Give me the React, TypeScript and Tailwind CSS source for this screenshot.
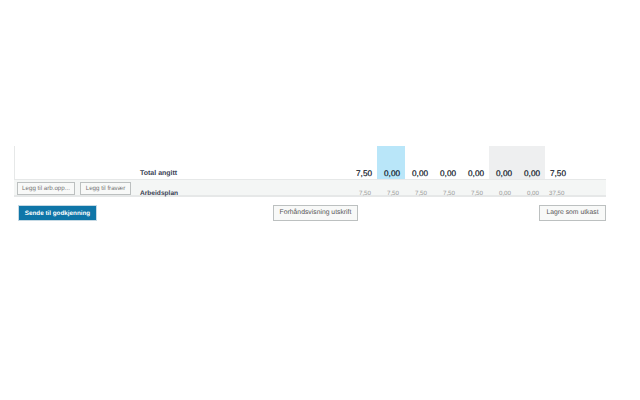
const days = [
  { t: "7,50", p: "7,50", bg: "" },
  { t: "0,00", p: "7,50", bg: "bg-[#b9e6f9]" },
  { t: "0,00", p: "7,50", bg: "" },
  { t: "0,00", p: "7,50", bg: "" },
  { t: "0,00", p: "7,50", bg: "" },
  { t: "0,00", p: "0,00", bg: "bg-[#eeeff0]" },
  { t: "0,00", p: "0,00", bg: "bg-[#eeeff0]" },
];

const geo = "[text-rendering:geometricPrecision] whitespace-nowrap";
const smallBtn = `h-[13px] border border-[#bcc0c0] bg-[#f8f9f8] text-[#777] text-[6.2px] flex items-center justify-center ${geo}`;
const bigBtn = `h-[16px] border border-[#bcc0c0] bg-[#f8f9f8] text-[#555] text-[6.8px] pt-[1px] flex items-center justify-center ${geo}`;
const total = `text-[8.2px] leading-[9px] text-[#0c1526] [-webkit-text-stroke:0.2px_#0c1526] ${geo}`;
const plan = `text-[6.2px] leading-[7px] pt-[10px] text-[#999] ${geo}`;

export default function App() {
  return (
    <div className="w-[640px] h-[400px] bg-white pt-[146px] font-['Liberation_Sans',sans-serif]">
      <div className="ml-[14px] w-[592px]">
        <div className="h-[34px] border-l border-b border-[#e6e8e8] flex">
          <div className={`w-[125px] ml-[125px] shrink-0 flex items-end pb-[1px] text-[7px] leading-[9px] font-bold text-[#3a4254] ${geo}`}>
            Total angitt
          </div>
          <div className="ml-[84px] flex">
            {days.map((d, i) => (
              <div key={i} className={`w-[28px] flex items-end justify-end pr-[5px] pb-[1px] ${total} ${d.bg}`}>
                {d.t}
              </div>
            ))}
            <div className={`w-[28px] flex items-end pl-[5px] pb-[1px] ${total}`}>7,50</div>
          </div>
        </div>
        <div className="h-[17px] bg-[#f4f6f5] border-b-2 border-[#e6e8e8] flex">
          <div className="w-[125px] shrink-0 flex gap-[5px] pl-[3px] pt-[2px]">
            <div className={`${smallBtn} w-[58px] shrink-0`}>Legg til arb.opp...</div>
            <div className={`${smallBtn} w-[51px] shrink-0`}>Legg til fravær</div>
          </div>
          <div className={`w-[209px] shrink-0 pl-[1px] pt-[10px] text-[6.6px] leading-[7px] font-bold text-[#3a4254] ${geo}`}>Arbeidsplan</div>
          <div className="flex">
            {days.map((d, i) => (
              <div key={i} className={`w-[28px] flex justify-end pr-[5px] ${plan}`}>
                {d.p}
              </div>
            ))}
            <div className={`w-[28px] pl-[5px] ${plan}`}>37,50</div>
          </div>
        </div>
      </div>
      <div className="ml-[18px] mt-[8px] flex items-start">
        <div className={`w-[79px] h-[16px] bg-[#0f76a8] border border-[#c5d9e4] text-white text-[6.3px] pt-[1px] font-bold flex items-center justify-center ${geo}`}>Sende til godkjenning</div>
        <div className={`${bigBtn} ml-[176px] w-[85px]`}>Forhåndsvisning utskrift</div>
        <div className={`${bigBtn} ml-[181px] w-[67px]`}>Lagre som utkast</div>
      </div>
    </div>
  );
}
